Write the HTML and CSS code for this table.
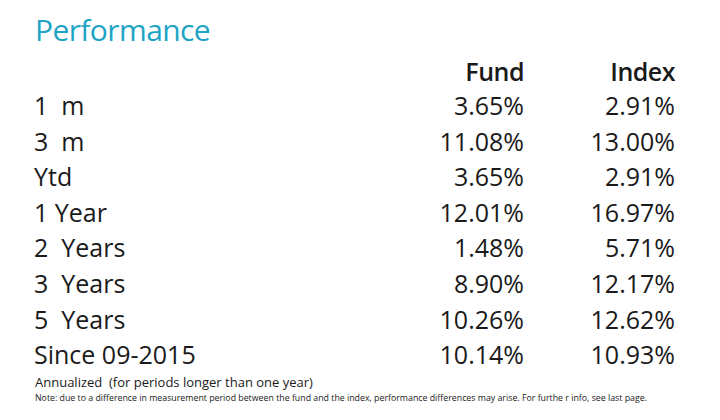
FILE: index.html
```html
<!DOCTYPE html>
<html>
<head>
<meta charset="utf-8">
<link rel="stylesheet" href="styles.css">
</head>
<body>
<div class="page">
  <h1 class="title">Performance</h1>
  <div class="perf">
    <div class="row head"><span class="lbl"></span><span class="val">Fund</span><span class="val">Index</span></div>
    <div class="row"><span class="lbl">1&nbsp; m</span><span class="val">3.65%</span><span class="val">2.91%</span></div>
    <div class="row"><span class="lbl">3&nbsp; m</span><span class="val">11.08%</span><span class="val">13.00%</span></div>
    <div class="row"><span class="lbl">Ytd</span><span class="val">3.65%</span><span class="val">2.91%</span></div>
    <div class="row"><span class="lbl">1 Year</span><span class="val">12.01%</span><span class="val">16.97%</span></div>
    <div class="row"><span class="lbl">2&nbsp; Years</span><span class="val">1.48%</span><span class="val">5.71%</span></div>
    <div class="row"><span class="lbl">3&nbsp; Years</span><span class="val">8.90%</span><span class="val">12.17%</span></div>
    <div class="row"><span class="lbl">5&nbsp; Years</span><span class="val">10.26%</span><span class="val">12.62%</span></div>
    <div class="row"><span class="lbl">Since 09-2015</span><span class="val">10.14%</span><span class="val">10.93%</span></div>
  </div>
  <p class="annual">Annualized&nbsp; (for periods longer than one year)</p>
  <p class="note">Note: due to a difference in measurement period between the fund and the index, performance differences may arise. For furthe r info, see last page.</p>
</div>
</body>
</html>
```
FILE: styles.css
```css
html, body {
  margin: 0;
  padding: 0;
  background: #ffffff;
}
.page {
  width: 720px;
  height: 420px;
  box-sizing: border-box;
  padding: 10px 45px 0 34px;
  font-family: "Open Sans", "Noto Sans", sans-serif;
  color: #1a1a1a;
  overflow: hidden;
}
.title {
  margin: 0 0 0 1px;
  font-size: 30px;
  line-height: 39px;
  font-weight: 400;
  letter-spacing: -0.6px;
  color: #1da4c5;
}
.perf {
  margin-top: 5px;
  display: flex;
  flex-direction: column;
}
.row {
  display: grid;
  grid-template-columns: 1fr 150px 151px;
  font-size: 25px;
  line-height: 35.6px;
  height: 35.6px;
}
.row.head {
  font-weight: 600;
  letter-spacing: -0.5px;
  line-height: 34px;
  height: 34px;
}
.val {
  text-align: right;
}
.lbl {
  white-space: nowrap;
}
.annual {
  margin: 0 0 0 1px;
  font-size: 13px;
  line-height: 18px;
}
.note {
  margin: 0 0 0 1px;
  font-size: 8.8px;
  line-height: 14px;
}
```
